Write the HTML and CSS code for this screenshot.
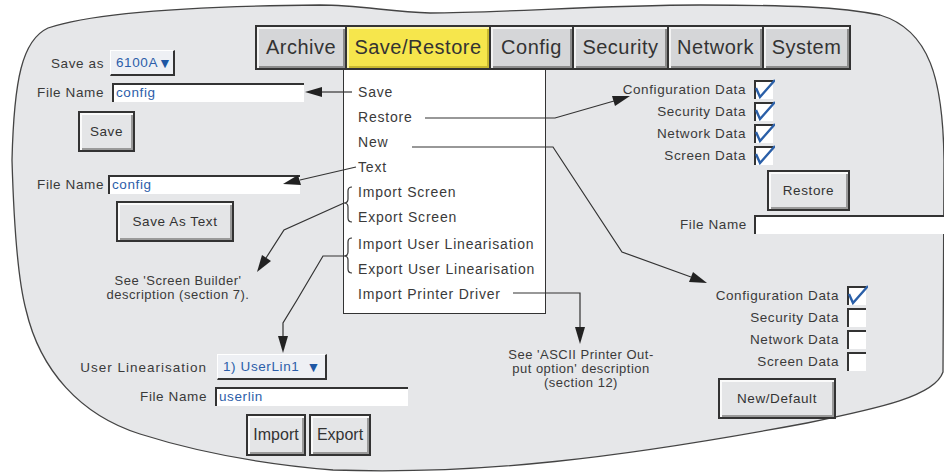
FILE: index.html
```html
<!DOCTYPE html>
<html lang="en">
<head>
    <meta charset="UTF-8">
    <title>Save/Restore</title>
    <link rel="stylesheet" href="styles.css">
</head>
<body>
<div class="canvas">
    <svg class="blob" width="944" height="473" viewBox="0 0 944 473">
        <path d="M320 5 C200 6 95 12 48 28 C22 40 14 80 12 160 C14 230 18 280 26 310 C40 370 80 415 140 434 C200 453 260 464 333 470 C480 475 620 458 807 423 C880 408 935 396 943 372 L944 160 C943 80 930 30 880 15 C840 7 790 5 700 5 C600 5 500 13 430 13 C390 12 360 5 320 5 Z"/>
    </svg>

    <div class="tabs">
        <div class="tab tab-archive">Archive</div>
        <div class="tab tab-save active">Save/Restore</div>
        <div class="tab tab-config">Config</div>
        <div class="tab tab-security">Security</div>
        <div class="tab tab-network">Network</div>
        <div class="tab tab-system">System</div>
    </div>

    <ul class="menu">
        <li>Save</li>
        <li>Restore</li>
        <li>New</li>
        <li>Text</li>
        <li>Import Screen</li>
        <li>Export Screen</li>
        <li class="gap">Import User Linearisation</li>
        <li>Export User Linearisation</li>
        <li>Import Printer Driver</li>
    </ul>

    <!-- save -->
    <div class="node save-form">
        <div class="form-grid">
            <span class="label">Save as</span>
            <span class="select select-small">6100A<span class="caret">▼</span></span>
            <span class="label">File Name</span>
            <span class="input input-save">config</span>
        </div>
        <div class="btn btn-save">Save</div>
    </div>

    <!-- save as text -->
    <div class="node text-form">
        <div class="form-grid text-grid">
            <span class="label">File Name</span>
            <span class="input">config</span>
        </div>
        <div class="btn btn-text">Save As Text</div>
    </div>

    <p class="node note note-screen">See 'Screen Builder'<br>description (section 7).</p>

    <!-- user linearisation -->
    <div class="node lin-form">
        <div class="form-grid lin-grid">
            <span class="label label-lin">User Linearisation</span>
            <span class="select select-lin">1) UserLin1 <span class="caret">▼</span></span>
            <span class="label">File Name</span>
            <span class="input input-lin">userlin</span>
        </div>
        <div class="btn-row">
            <div class="btn btn-import">Import</div>
            <div class="btn btn-export">Export</div>
        </div>
    </div>

    <!-- restore -->
    <div class="node checks restore-checks">
        <div class="check-row"><span class="label">Configuration Data</span><span class="box checked"><svg viewBox="0 0 20 20"><path d="M1 9 L5 18 L20 1"/></svg></span></div>
        <div class="check-row"><span class="label">Security Data</span><span class="box checked"><svg viewBox="0 0 20 20"><path d="M1 9 L5 18 L20 1"/></svg></span></div>
        <div class="check-row"><span class="label">Network Data</span><span class="box checked"><svg viewBox="0 0 20 20"><path d="M1 9 L5 18 L20 1"/></svg></span></div>
        <div class="check-row"><span class="label">Screen Data</span><span class="box checked"><svg viewBox="0 0 20 20"><path d="M1 9 L5 18 L20 1"/></svg></span></div>
    </div>
    <div class="node btn btn-restore">Restore</div>
    <div class="node restore-file">
        <span class="label">File Name</span>
        <span class="input input-wide"></span>
    </div>

    <!-- new -->
    <div class="node checks new-checks">
        <div class="check-row"><span class="label">Configuration Data</span><span class="box checked"><svg viewBox="0 0 20 20"><path d="M1 9 L5 18 L20 1"/></svg></span></div>
        <div class="check-row"><span class="label">Security Data</span><span class="box"></span></div>
        <div class="check-row"><span class="label">Network Data</span><span class="box"></span></div>
        <div class="check-row"><span class="label">Screen Data</span><span class="box"></span></div>
    </div>
    <div class="node btn btn-new">New/Default</div>

    <p class="node note note-ascii">See 'ASCII Printer Out-<br>put option' description<br>(section 12)</p>

    <svg class="arrows" width="944" height="473" viewBox="0 0 944 473">
        <g class="lines">
            <path d="M352 92 L320 92"/>
            <path d="M425 118 L555 118 L614 101"/>
            <path d="M412 147 L553 147 L622 252 L691 277"/>
            <path d="M356 167 L300 180"/>
            <path d="M344 203 L284 230 L266 258"/>
            <path d="M344 256 L323 256 L297 300 L283 323 L283 338"/>
            <path d="M513 293 L580 293 L580 328"/>
            <path d="M352 187 Q348 187 348 191 L348 199 Q348 203 344 203 Q348 203 348 207 L348 218 Q348 222 352 222"/>
            <path d="M352 238 Q348 238 348 242 L348 252 Q348 256 344 256 Q348 256 348 260 L348 269 Q348 273 352 273"/>
        </g>
        <g class="heads">
            <polygon points="305,92 322,87 322,97"/>
            <polygon points="630,96 615,106 612,96"/>
            <polygon points="707,283 689,282 693,272"/>
            <polygon points="283,184 301,185 298,175"/>
            <polygon points="257,272 271,261 262,255"/>
            <polygon points="283,353 278,336 288,336"/>
            <polygon points="580,344 575,327 585,327"/>
        </g>
    </svg>
</div>
</body>
</html>
```

FILE: styles.css
```css
body {
    margin: 0;
    background: #fff;
    font-family: 'Liberation Sans', Arial, sans-serif;
    color: #3a3a3a;
}
.canvas {
    position: relative;
    width: 944px;
    height: 473px;
    overflow: hidden;
}
.blob {
    position: absolute;
    left: 0;
    top: 0;
}
.blob path {
    fill: #e6e7e9;
    stroke: #444;
    stroke-width: 1.3;
}
.arrows {
    position: absolute;
    left: 0;
    top: 0;
    pointer-events: none;
}
.arrows .lines path {
    fill: none;
    stroke: #333;
    stroke-width: 1.2;
}
.arrows .heads polygon {
    fill: #222;
}
.node {
    position: absolute;
}

/* tabs */
.tabs {
    position: absolute;
    left: 255px;
    top: 25px;
    display: flex;
    gap: 2px;
    padding: 2px;
    background: #333;
}
.tab {
    height: 41px;
    display: flex;
    align-items: center;
    justify-content: center;
    background: #d5d6d8;
    box-shadow: inset 2px 2px 0 #f3f3f3, inset -2px -2px 0 #8c8c8c;
    font-size: 20px;
    letter-spacing: 0.5px;
    color: #333;
}
.tab.active {
    background: #f6e64c;
    box-shadow: inset 2px 2px 0 #fbf4a8, inset -2px -2px 0 #c9b930;
}
.tab-archive { width: 88px; }
.tab-save { width: 142px; }
.tab-config { width: 81px; }
.tab-security { width: 93px; }
.tab-network { width: 93px; }
.tab-system { width: 85px; }

/* menu */
.menu {
    position: absolute;
    left: 343px;
    top: 70px;
    width: 201px;
    height: 233px;
    margin: 0;
    padding: 10px 0 0 0;
    list-style: none;
    background: #fff;
    border: 1.5px solid #333;
    border-top: none;
}
.menu li {
    height: 25px;
    line-height: 25px;
    padding-left: 14px;
    font-size: 14px;
    letter-spacing: 0.8px;
    color: #3a3a3a;
}
.menu li.gap {
    margin-top: 2px;
}

/* form bits */
.label {
    font-size: 13.5px;
    letter-spacing: 0.6px;
    color: #3a3a3a;
    text-align: right;
    white-space: nowrap;
}
.label-lin {
    letter-spacing: 1px;
}
.form-grid {
    display: grid;
    grid-template-columns: 72px auto;
    column-gap: 6px;
    row-gap: 7px;
    align-items: center;
}
.select {
    display: flex;
    align-items: center;
    justify-content: space-between;
    box-sizing: border-box;
    height: 26px;
    padding: 0 4px 0 5px;
    background: #eef0f4;
    border-top: 1.5px solid #fff;
    border-left: 1.5px solid #fff;
    border-right: 2px solid #333;
    border-bottom: 2px solid #333;
    color: #2c5ea9;
    font-size: 13.5px;
    letter-spacing: 0.6px;
}
.caret {
    font-size: 14px;
    color: #1f57a4;
}
.select-small {
    width: 65px;
}
.input {
    display: block;
    box-sizing: border-box;
    width: 192px;
    height: 19px;
    line-height: 16px;
    padding-left: 2px;
    background: #fff;
    border-top: 2px solid #333;
    border-left: 2px solid #333;
    color: #2c5ea9;
    font-size: 13.5px;
    letter-spacing: 0.6px;
}
.input-save {
    margin-left: 2px;
}
.btn {
    display: flex;
    align-items: center;
    justify-content: center;
    box-sizing: border-box;
    height: 41px;
    background: #e4e5e7;
    border: 2px solid #333;
    box-shadow: inset 2px 2px 0 #fafafa, inset -2px -2px 0 #9a9a9a;
    font-size: 13.5px;
    letter-spacing: 0.6px;
    color: #333;
}
.save-form {
    left: 32px;
    top: 50px;
}
.btn-save {
    width: 57px;
    margin: 9px 0 0 46px;
}
.text-form {
    left: 32px;
    top: 175px;
}
.text-grid {
    column-gap: 4px;
}
.btn-text {
    width: 118px;
    margin: 7px 0 0 84px;
}
.note {
    margin: 0;
    font-size: 13px;
    line-height: 14px;
    letter-spacing: 0.5px;
    text-align: center;
    color: #3a3a3a;
}
.note-screen {
    left: 98px;
    top: 274px;
    width: 160px;
}
.note-ascii {
    left: 486px;
    top: 348px;
    width: 190px;
}
.lin-form {
    left: 70px;
    top: 354px;
}
.lin-grid {
    grid-template-columns: 137px auto;
    column-gap: 10px;
}
.select-lin {
    width: 110px;
}
.input-lin {
    width: 193px;
    margin-left: -2px;
}
.btn-row {
    display: flex;
    gap: 3px;
    margin: 8px 0 0 176px;
}
.btn-import,
.btn-export {
    height: 42px;
    letter-spacing: 0;
    font-size: 16px;
}
.btn-import {
    width: 60px;
}
.btn-export {
    width: 62px;
}

/* check lists */
.checks {
    display: flex;
    flex-direction: column;
    align-items: flex-end;
    gap: 3px;
}
.check-row {
    display: flex;
    align-items: center;
    gap: 8px;
    height: 19px;
}
.box {
    position: relative;
    box-sizing: border-box;
    width: 19px;
    height: 19px;
    background: #fff;
    border-top: 2px solid #333;
    border-left: 2px solid #333;
}
.box svg {
    position: absolute;
    left: -1px;
    top: -3px;
    width: 20px;
    height: 20px;
}
.box svg path {
    fill: none;
    stroke: #2a5fa8;
    stroke-width: 2.4;
}
.restore-checks {
    right: 171px;
    top: 80px;
}
.btn-restore {
    left: 767px;
    top: 170px;
    width: 83px;
}
.restore-file {
    left: 680px;
    top: 215px;
    display: flex;
    align-items: center;
    gap: 7px;
}
.input-wide {
    width: 200px;
}
.new-checks {
    right: 78px;
    top: 286px;
}
.btn-new {
    left: 718px;
    top: 378px;
    width: 118px;
}
```
